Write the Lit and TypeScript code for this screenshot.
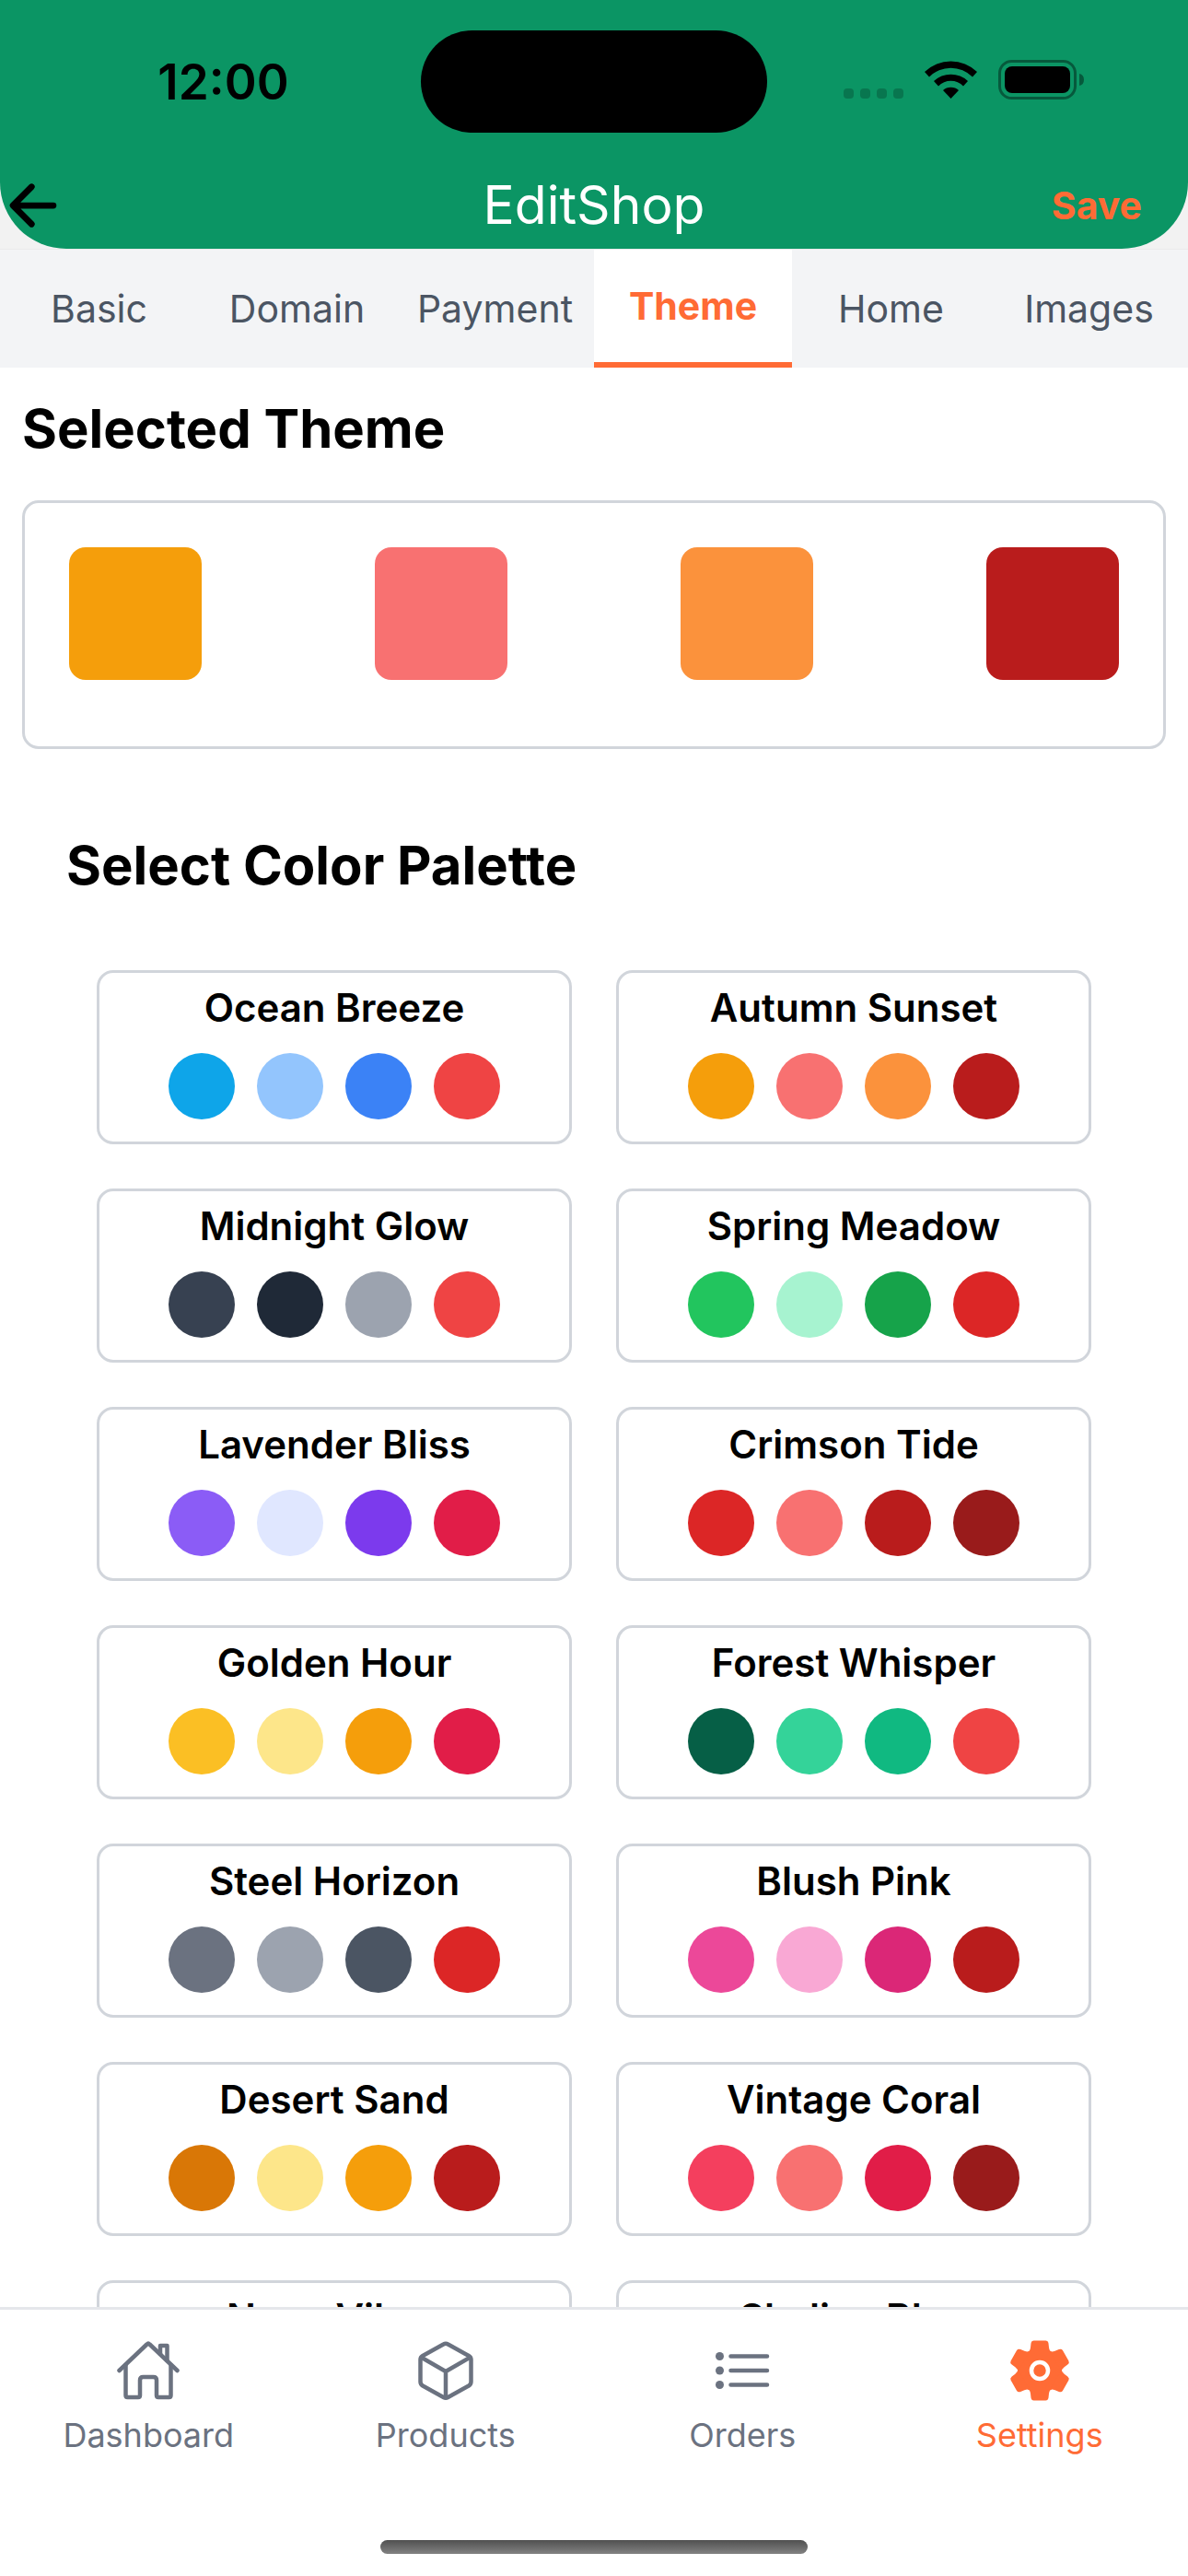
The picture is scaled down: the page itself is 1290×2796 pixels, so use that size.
import { LitElement, html, css, svg } from "lit";
import { customElement, state } from "lit/decorators.js";

interface Palette {
  name: string;
  colors: string[];
}

const PALETTES: Palette[] = [
  { name: "Ocean Breeze", colors: ["#0ea5e9", "#93c5fd", "#3b82f6", "#ef4444"] },
  { name: "Autumn Sunset", colors: ["#f59e0b", "#f87171", "#fb923c", "#b91c1c"] },
  { name: "Midnight Glow", colors: ["#374151", "#1f2937", "#9ca3af", "#ef4444"] },
  { name: "Spring Meadow", colors: ["#22c55e", "#a7f3d0", "#16a34a", "#dc2626"] },
  { name: "Lavender Bliss", colors: ["#8b5cf6", "#e0e7ff", "#7c3aed", "#e11d48"] },
  { name: "Crimson Tide", colors: ["#dc2626", "#f87171", "#b91c1c", "#991b1b"] },
  { name: "Golden Hour", colors: ["#fbbf24", "#fde68a", "#f59e0b", "#e11d48"] },
  { name: "Forest Whisper", colors: ["#065f46", "#34d399", "#10b981", "#ef4444"] },
  { name: "Steel Horizon", colors: ["#6b7280", "#9ca3af", "#4b5563", "#dc2626"] },
  { name: "Blush Pink", colors: ["#ec4899", "#f9a8d4", "#db2777", "#b91c1c"] },
  { name: "Desert Sand", colors: ["#d97706", "#fde68a", "#f59e0b", "#b91c1c"] },
  { name: "Vintage Coral", colors: ["#f43f5e", "#f87171", "#e11d48", "#991b1b"] },
  { name: "Neon Vibes", colors: ["#22d3ee", "#a3e635", "#e879f9", "#f43f5e"] },
  { name: "Skyline Blue", colors: ["#0284c7", "#7dd3fc", "#2563eb", "#dc2626"] },
];

const TABS = ["Basic", "Domain", "Payment", "Theme", "Home", "Images"];

const homeIcon = svg`<g fill="none" stroke="currentColor" stroke-width="4.5" stroke-linecap="round" stroke-linejoin="round">
  <path d="M4.5 36 34.500 7.500q1.500-1.500 3 0L67.500 36"/>
  <path d="M11.500 30v33q0 2 2 2h11.500q2 0 2-2V46.500q0-3.500 3.500-3.500h11q3.500 0 3.500 3.500V63q0 2 2 2h11.500q2 0 2-2V30"/>
  <path d="M49 18V9h7.500v16"/></g>`;

const cubeIcon = svg`<g fill="none" stroke="currentColor" stroke-width="4.5" stroke-linecap="round" stroke-linejoin="round">
  <path d="M33.500 7.500q2.500-1.500 5 0L61 20q2.500 1.500 2.500 4v24q0 3-2.500 4.500L38.500 65q-2.500 1.500-5 0L11 52.500Q8.500 51 8.500 48V24q0-2.500 2.500-4z"/>
  <path d="M10 22l26 15 26-15M36 37v28"/></g>`;

const listIcon = svg`<g fill="none" stroke="currentColor" stroke-width="4.5" stroke-linecap="round">
  <path d="M23.500 20.500H63M23.500 36H63M23.500 51.500H63"/></g>
  <g fill="currentColor"><circle cx="11.500" cy="20.500" r="4.500"/><circle cx="11.500" cy="36" r="4.500"/><circle cx="11.500" cy="51.500" r="4.500"/></g>`;

const gearTooth = "M-13-20Q-10.500-21-10-25L-9.500-29.500q.500-3 3-3h13q2.500 0 3 3L10-25q.500 4 3 5z";
const gearIcon = svg`<g transform="translate(36 36)">
  <g fill="currentColor"><circle r="24"/>
  ${[0, 60, 120, 180, 240, 300].map((a) => svg`<path d=${gearTooth} transform="rotate(${a})"/>`)}</g>
  <circle r="9" fill="currentColor" stroke="#fff" stroke-width="4.5"/></g>`;

const NAV = [
  { label: "Dashboard", icon: homeIcon },
  { label: "Products", icon: cubeIcon },
  { label: "Orders", icon: listIcon },
  { label: "Settings", icon: gearIcon },
];

@customElement("app-root")
export class AppRoot extends LitElement {
  @state() private tab = "Theme";
  @state() private page = "Settings";
  @state() private selected = PALETTES[1];

  static styles = css`
    :host {
      display: flex;
      flex-direction: column;
      height: 100vh;
      overflow: hidden;
      background: #fff;
      color: #000;
      font-family: Inter, "Liberation Sans", sans-serif;
    }
    * { box-sizing: border-box; }
    button {
      margin: 0;
      padding: 0;
      border: 0;
      background: none;
      color: inherit;
      font: inherit;
      cursor: pointer;
    }
    svg { display: block; }
    .top { background: #f2f2f2; border-bottom: 1px solid #ebebeb; }
    .header {
      background: #0b9564;
      border-radius: 0 0 72px 72px;
      padding-bottom: 11px;
    }
    .status {
      display: grid;
      grid-template-columns: 1fr 376px 1fr;
      align-items: center;
      padding-top: 33px;
    }
    .time {
      font-size: 53px;
      line-height: 60px;
      font-weight: 600;
      text-align: center;
      padding-left: 28px;
    }
    .island { height: 111px; border-radius: 56px; background: #000; }
    .signals { justify-self: end; padding: 0 112px 3px 0; }
    .bar {
      display: grid;
      grid-template-columns: 1fr auto 1fr;
      align-items: center;
      height: 72px;
      margin-top: 43px;
    }
    .back { justify-self: start; }
    .title { margin: 0; font-size: 57px; line-height: 72px; font-weight: 400; color: #fff; }
    .save {
      justify-self: end;
      padding-right: 50px;
      font-size: 41px;
      line-height: 48px;
      font-weight: 700;
      color: #ff6b35;
    }
    .tabs { display: flex; flex: none; height: 128px; background: #f3f4f6; }
    .tab {
      flex: 1 1 0;
      min-width: 0;
      font-size: 41px;
      line-height: 48px;
      color: #4b5563;
    }
    .tab.on {
      background: #fff;
      border-bottom: 6px solid #ff6b35;
      color: #ff6b35;
      font-weight: 700;
    }
    main { flex: 1 1 0; min-height: 0; overflow: hidden; padding: 30px 24px 0; }
    h2 { margin: 0; font-size: 58px; line-height: 72px; font-weight: 700; }
    .chosen {
      display: flex;
      justify-content: space-between;
      margin-top: 42px;
      padding: 48px 48px 72px;
      border: 3px solid #d1d5db;
      border-radius: 18px;
    }
    .square { width: 144px; height: 144px; border-radius: 18px; }
    .picker { padding: 90px 48px 0; }
    .grid {
      display: grid;
      grid-template-columns: 1fr 1fr;
      gap: 48px;
      padding: 78px 33px 0;
    }
    .card {
      display: flex;
      flex-direction: column;
      align-items: center;
      gap: 24px;
      padding: 12px 24px 24px;
      border: 3px solid #d1d5db;
      border-radius: 18px;
    }
    .name { font-size: 42px; line-height: 51px; font-weight: 600; }
    .dots { display: flex; gap: 24px; }
    .dot { width: 72px; height: 72px; border-radius: 50%; }
    .footer { flex: none; border-top: 3px solid #e5e7eb; background: #fff; }
    .nav { display: flex; padding-top: 30px; }
    .link {
      flex: 1 1 0;
      display: flex;
      flex-direction: column;
      align-items: center;
      gap: 12px;
      font-size: 36px;
      line-height: 44px;
      color: #6b7280;
      text-decoration: none;
    }
    .link.on { color: #ff6b35; }
    .indicator {
      width: 36%;
      height: 15px;
      margin: 92px auto 24px;
      border-radius: 8px;
      background: linear-gradient(#505050, #828282);
    }
  `;

  private pick(p: Palette) {
    this.selected = p;
  }

  render() {
    return html`
      <div class="top">
        <header class="header">
          <div class="status">
            <div class="time">12:00</div>
            <div class="island"></div>
            <svg class="signals" width="374" height="47" viewBox="0 0 262 44" aria-hidden="true">
              <g opacity="0.2">
                <rect x="0" y="31" width="11" height="11" rx="4"/>
                <rect x="18" y="31" width="11" height="11" rx="4"/>
                <rect x="36" y="31" width="11" height="11" rx="4"/>
                <rect x="54" y="31" width="11" height="11" rx="4"/>
              </g>
              <path d="M88 13a41 41 0 0 1 57 0l-5 5.500a33 33 0 0 0-47 0z"/>
              <path d="M98 23a27 27 0 0 1 37 0l-5 5.500a19 19 0 0 0-27 0z"/>
              <path d="M108 33a13 13 0 0 1 17 0l-8.500 9z"/>
              <rect x="169.500" y="1.500" width="82" height="40" rx="13" fill="none" stroke="#000" stroke-width="3" opacity="0.4"/>
              <rect x="175" y="7" width="71" height="29" rx="8"/>
              <path d="M256 15q5 1 5 6.500T256 28z" opacity="0.4"/>
            </svg>
          </div>
          <div class="bar">
            <button class="back" aria-label="Back">
              <svg width="72" height="72" viewBox="0 0 512 512" fill="none" stroke="#000" stroke-width="48" stroke-linecap="round" stroke-linejoin="round">
                <path d="M244 400 100 256l144-144M120 256h292"/>
              </svg>
            </button>
            <h1 class="title">EditShop</h1>
            <button class="save">Save</button>
          </div>
        </header>
      </div>
      <div class="tabs" role="tablist">
        ${TABS.map(
          (t) => html`<button class="tab ${t === this.tab ? "on" : ""}" role="tab"
            aria-selected=${t === this.tab} @click=${() => (this.tab = t)}>${t}</button>`,
        )}
      </div>
      <main>
        <h2>Selected Theme</h2>
        <div class="chosen">
          ${this.selected.colors.map((c) => html`<div class="square" style="background:${c}"></div>`)}
        </div>
        <section class="picker">
          <h2>Select Color Palette</h2>
          <div class="grid">
            ${PALETTES.map(
              (p) => html`<button class="card" @click=${() => this.pick(p)}>
                <span class="name">${p.name}</span>
                <span class="dots">
                  ${p.colors.map((c) => html`<span class="dot" style="background:${c}"></span>`)}
                </span>
              </button>`,
            )}
          </div>
        </section>
      </main>
      <footer class="footer">
        <nav class="nav">
          ${NAV.map(
            (n) => html`<a class="link ${n.label === this.page ? "on" : ""}" href="#${n.label.toLowerCase()}"
              @click=${() => (this.page = n.label)}>
              <svg width="72" height="72" viewBox="0 0 72 72" aria-hidden="true">${n.icon}</svg>
              <span>${n.label}</span>
            </a>`,
          )}
        </nav>
        <div class="indicator"></div>
      </footer>
    `;
  }
}
